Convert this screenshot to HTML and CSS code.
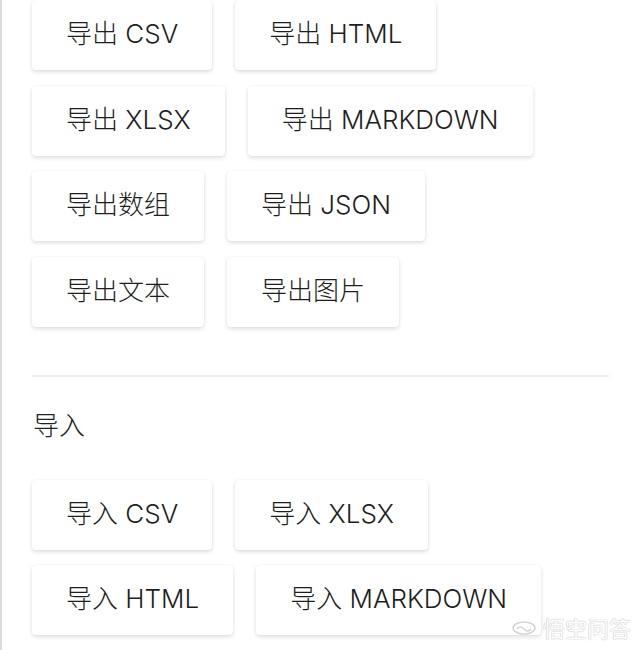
FILE: index.html
```html
<!DOCTYPE html>
<html lang="zh-CN">
<head>
<meta charset="UTF-8">
<meta name="viewport" content="width=device-width, initial-scale=1.0">
<title>导出与导入</title>
<link rel="stylesheet" href="styles.css">
</head>
<body>
  <div class="page">
    <div class="btn-group">
      <button class="btn">导出 CSV</button>
      <button class="btn">导出 HTML</button>
      <button class="btn">导出 XLSX</button>
      <button class="btn">导出 MARKDOWN</button>
      <button class="btn">导出数组</button>
      <button class="btn">导出 JSON</button>
      <button class="btn">导出文本</button>
      <button class="btn">导出图片</button>
    </div>

    <div class="divider"></div>

    <h3 class="section-title">导入</h3>

    <div class="btn-group">
      <button class="btn">导入 CSV</button>
      <button class="btn">导入 XLSX</button>
      <button class="btn">导入 HTML</button>
      <button class="btn">导入 MARKDOWN</button>
    </div>
  </div>

  <div class="watermark">
    <svg width="26" height="16" viewBox="0 0 26 16">
      <ellipse cx="13" cy="9" rx="11" ry="6" fill="#fff" stroke="#d6d6d6" stroke-width="1.5"/>
      <path d="M6 10 q3.5 -4 7 0 q3.5 4 7 0" fill="none" stroke="#d6d6d6" stroke-width="1.5"/>
    </svg>
    <span>悟空问答</span>
  </div>
</body>
</html>
```

FILE: styles.css
```css
body {
  margin: 0;
  background: #fff;
  font-family: Inter, "Noto Sans CJK SC", sans-serif;
  color: #222;
}
.page {
  border-left: 2px solid #dcdcdc;
  padding: 0 31px 0 30px;
  height: 650px;
  overflow: hidden;
}
.btn-group {
  display: flex;
  flex-wrap: wrap;
  column-gap: 23px;
  row-gap: 15.5px;
}
.btn {
  height: 70px;
  padding: 0 34px 2px;
  border: none;
  border-radius: 4px;
  background: #fff;
  box-shadow: 0 2px 4px rgba(0, 0, 0, 0.13), 0 0 2px rgba(0, 0, 0, 0.06);
  font-family: inherit;
  font-size: 26px;
  font-weight: 300;
  line-height: 1;
  color: #1e1e1e;
}
.divider {
  height: 2px;
  background: #f0f0f0;
  margin-top: 48px;
}
.section-title {
  margin: 29px 0 34px 1px;
  font-size: 26px;
  font-weight: 300;
  line-height: 40px;
}
.watermark {
  position: absolute;
  left: 511px;
  top: 611px;
  display: flex;
  align-items: center;
  gap: 6px;
}
.watermark span {
  font-size: 22px;
  font-weight: 400;
  color: #fff;
  text-shadow: 0 0 1px #bbb, 0 0 1px #bbb;
}
```
